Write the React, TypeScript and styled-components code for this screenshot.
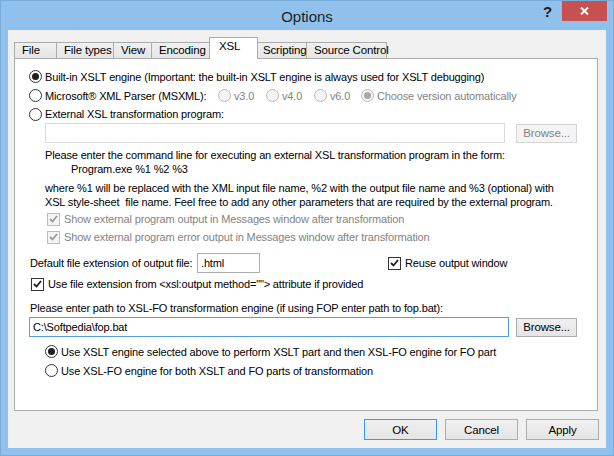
import React from 'react';
import styled, { createGlobalStyle, css } from 'styled-components';

const Global = createGlobalStyle`
  html, body { margin: 0; padding: 0; }
  body {
    width: 614px; height: 456px; overflow: hidden;
    font-family: "Liberation Sans", Arial, sans-serif;
    font-size: 11px; letter-spacing: -0.15px; color: #000;
  }
  * { box-sizing: border-box; }
`;

const Window = styled.div`
  width: 614px; height: 456px;
  background: #8fc1ec;
  border: 1px solid #78acd9;
  display: flex; flex-direction: column;
`;

const TitleBar = styled.div`
  height: 29px;
  display: grid;
  grid-template-columns: 1fr auto 1fr;
  align-items: start;
`;

const Title = styled.div`
  grid-column: 2;
  font-size: 15px;
  letter-spacing: 0;
  line-height: 29px;
  color: #1e1e1e;
  padding-top: 1px;
`;

const Controls = styled.div`
  grid-column: 3;
  justify-self: end;
  display: flex;
  align-items: flex-start;
  margin-right: 6px;
`;

const Help = styled.div`
  font-weight: bold;
  font-size: 15px;
  line-height: 20px;
  color: #1e1e1e;
  margin-right: 10px;
  margin-top: 1px;
`;

const Close = styled.div`
  width: 45px; height: 20px;
  background: #c75050;
  display: flex; align-items: center; justify-content: center;
`;

const Client = styled.div`
  flex: 1;
  margin: 0 7px 7px 7px;
  background: #f0f0f0;
  padding: 7px 8px 0 6px;
  display: flex; flex-direction: column;
`;

const TabStrip = styled.div`
  height: 21px;
  display: flex;
  align-items: flex-end;
  position: relative;
  z-index: 1;
`;

const Tab = styled.div<{ $w: number; $active?: boolean }>`
  width: ${p => p.$w}px;
  height: 16px;
  border: 1px solid #acacac;
  border-bottom: none;
  background: linear-gradient(#f0f0f0, #e5e5e5);
  margin-left: -1px;
  padding-left: 7px;
  line-height: 15px;
  font-size: 11.5px;
  white-space: nowrap;
  &:first-child { margin-left: 0; }
  ${p => p.$active && css`
    height: 22px;
    margin: 0 -2px -1px -3px;
    width: ${p.$w + 4}px;
    background: #fff;
    padding-left: 9px;
    line-height: 17px;
    position: relative;
    z-index: 2;
  `}
`;

const Panel = styled.div`
  width: 584px; height: 353px;
  border: 1px solid #acacac;
  background: #fff;
  padding: 8px 0 0 14px;
  display: flex; flex-direction: column;
`;

const Row = styled.div<{ $h?: number; $mt?: number; $indent?: number }>`
  display: flex;
  align-items: center;
  height: ${p => p.$h ?? 19}px;
  margin-top: ${p => p.$mt ?? 0}px;
  padding-left: ${p => p.$indent ?? 0}px;
  white-space: nowrap;
`;

const TextLine = styled.div<{ $mt?: number; $indent?: number }>`
  line-height: 14px;
  margin-top: ${p => p.$mt ?? 0}px;
  padding-left: ${p => p.$indent ?? 0}px;
  white-space: pre;
`;

const Option = styled.div<{ $w?: number; $gap?: number }>`
  display: flex; align-items: center;
  gap: ${p => p.$gap ?? 3}px;
  ${p => p.$w !== undefined && css`width: ${p.$w}px;`}
`;

const Label = styled.span<{ $disabled?: boolean }>`
  color: ${p => (p.$disabled ? '#838383' : '#000')};
`;

const FieldLabel = styled.span<{ $w: number }>`
  width: ${p => p.$w}px;
  flex: none;
`;

const RadioCircle = styled.span<{ $checked?: boolean; $disabled?: boolean }>`
  width: 13px; height: 13px; border-radius: 50%;
  flex: none;
  border: 1px solid ${p => (p.$disabled ? '#bcbcbc' : '#333')};
  background: ${p => (p.$disabled ? '#f4f4f4' : '#fff')};
  display: flex; align-items: center; justify-content: center;
  &::after {
    content: '';
    display: ${p => (p.$checked ? 'block' : 'none')};
    width: 7px; height: 7px; border-radius: 50%;
    background: ${p => (p.$disabled ? '#a8a8a8' : '#1e1e1e')};
  }
`;

const CheckBox = styled.span<{ $disabled?: boolean }>`
  width: 13px; height: 13px; flex: none;
  border: 1px solid ${p => (p.$disabled ? '#bcbcbc' : '#333')};
  background: ${p => (p.$disabled ? '#f4f4f4' : '#fff')};
  display: flex; align-items: center; justify-content: center;
`;

const Field = styled.div<{ $w: number; $focus?: boolean; $disabled?: boolean; $h?: number }>`
  width: ${p => p.$w}px;
  height: ${p => p.$h ?? 20}px;
  border: 1px solid ${p => (p.$focus ? '#569de5' : p.$disabled ? '#d9d9d9' : '#abadb3')};
  background: #fff;
  padding-left: 3px;
  line-height: 18px;
  flex: none;
`;

const Button = styled.div<{ $w?: number; $default?: boolean; $disabled?: boolean; $h?: number }>`
  width: ${p => p.$w ?? 73}px;
  height: ${p => p.$h ?? 21}px;
  flex: none;
  border: 1px solid ${p => (p.$default ? '#3399ff' : p.$disabled ? '#d5d5d5' : '#acacac')};
  background: ${p => (p.$disabled ? '#f4f4f4' : 'linear-gradient(#f0f0f0, #e5e5e5)')};
  color: ${p => (p.$disabled ? '#838383' : '#000')};
  font-size: 11.5px;
  display: flex; align-items: center; justify-content: center;
`;

const ButtonBar = styled.div`
  display: flex;
  justify-content: flex-end;
  gap: 8px;
  margin-top: 8px;
  margin-right: -1px;
`;

const Spacer = styled.div<{ $w: number }>`
  width: ${p => p.$w}px; flex: none;
`;

const Radio = ({ checked, disabled, label, w }: { checked?: boolean; disabled?: boolean; label: string; w?: number }) => (
  <Option $w={w}>
    <RadioCircle $checked={checked} $disabled={disabled} />
    <Label $disabled={disabled}>{label}</Label>
  </Option>
);

const Check = ({ disabled, label }: { disabled?: boolean; label: string }) => (
  <Option $gap={4}>
    <CheckBox $disabled={disabled}>
      <svg width="9" height="8" viewBox="0 0 9 8">
        <path d="M1 4 L3.5 6.5 L8 1" fill="none" stroke={disabled ? '#9a9a9a' : '#1e1e1e'} strokeWidth="1.8" />
      </svg>
    </CheckBox>
    <Label $disabled={disabled}>{label}</Label>
  </Option>
);

const tabs: [string, number][] = [
  ['File', 43], ['File types', 58], ['View', 39], ['Encoding', 61], ['XSL', 45], ['Scripting', 52], ['Source Control', 81],
];

export default function App() {
  return (
    <>
      <Global />
      <Window>
        <TitleBar>
          <Title>Options</Title>
          <Controls>
            <Help>?</Help>
            <Close>
              <svg width="9" height="8" viewBox="0 0 9 8">
                <path d="M1 0.5 L8 7.5 M8 0.5 L1 7.5" stroke="#fff" strokeWidth="2" />
              </svg>
            </Close>
          </Controls>
        </TitleBar>
        <Client>
          <TabStrip>
            {tabs.map(([t, w]) => (
              <Tab key={t} $w={w} $active={t === 'XSL'}>{t}</Tab>
            ))}
          </TabStrip>
          <Panel>
            <Row>
              <Radio checked label="Built-in XSLT engine (Important: the built-in XSLT engine is always used for XSLT debugging)" />
            </Row>
            <Row>
              <Radio w={189} label="Microsoft® XML Parser (MSXML):" />
              <Radio w={48} disabled label="v3.0" />
              <Radio w={48} disabled label="v4.0" />
              <Radio w={47} disabled label="v6.0" />
              <Radio disabled checked label="Choose version automatically" />
            </Row>
            <Row $h={18}>
              <Radio label="External XSL transformation program:" />
            </Row>
            <Row $h={20} $indent={16}>
              <Field $w={460} $disabled />
              <Spacer $w={11} />
              <Button $w={61} $h={19} $disabled>Browse...</Button>
            </Row>
            <TextLine $mt={5} $indent={16}>Please enter the command line for executing an external XSL transformation program in the form:</TextLine>
            <TextLine $indent={42}>Program.exe %1 %2 %3</TextLine>
            <TextLine $mt={5} $indent={16}>where %1 will be replaced with the XML input file name, %2 with the output file name and %3 (optional) with</TextLine>
            <TextLine $indent={16}>XSL style-sheet  file name. Feel free to add any other parameters that are required by the external program.</TextLine>
            <Row $h={18} $mt={1} $indent={18}>
              <Check disabled label="Show external program output in Messages window after transformation" />
            </Row>
            <Row $h={18} $indent={18}>
              <Check disabled label="Show external program error output in Messages window after transformation" />
            </Row>
            <Row $h={20} $mt={7} $indent={1}>
              <FieldLabel $w={167}>Default file extension of output file:</FieldLabel>
              <Field $w={63}>.html</Field>
              <Spacer $w={128} />
              <Check label="Reuse output window" />
            </Row>
            <Row $h={18} $mt={2} $indent={2}>
              <Check label={'Use file extension from <xsl:output method=""> attribute if provided'} />
            </Row>
            <TextLine $mt={8} $indent={1}>Please enter path to XSL-FO transformation engine (if using FOP enter path to fop.bat):</TextLine>
            <Row $h={20} $mt={2}>
              <Field $w={480} $focus>C:\Softpedia\fop.bat</Field>
              <Spacer $w={7} />
              <Button $w={61} $h={19}>Browse...</Button>
            </Row>
            <Row $mt={5} $indent={16}>
              <Radio checked label="Use XSLT engine selected above to perform XSLT part and then XSL-FO engine for FO part" />
            </Row>
            <Row $indent={16}>
              <Radio label="Use XSL-FO engine for both XSLT and FO parts of transformation" />
            </Row>
          </Panel>
          <ButtonBar>
            <Button $default>OK</Button>
            <Button>Cancel</Button>
            <Button>Apply</Button>
          </ButtonBar>
        </Client>
      </Window>
    </>
  );
}
